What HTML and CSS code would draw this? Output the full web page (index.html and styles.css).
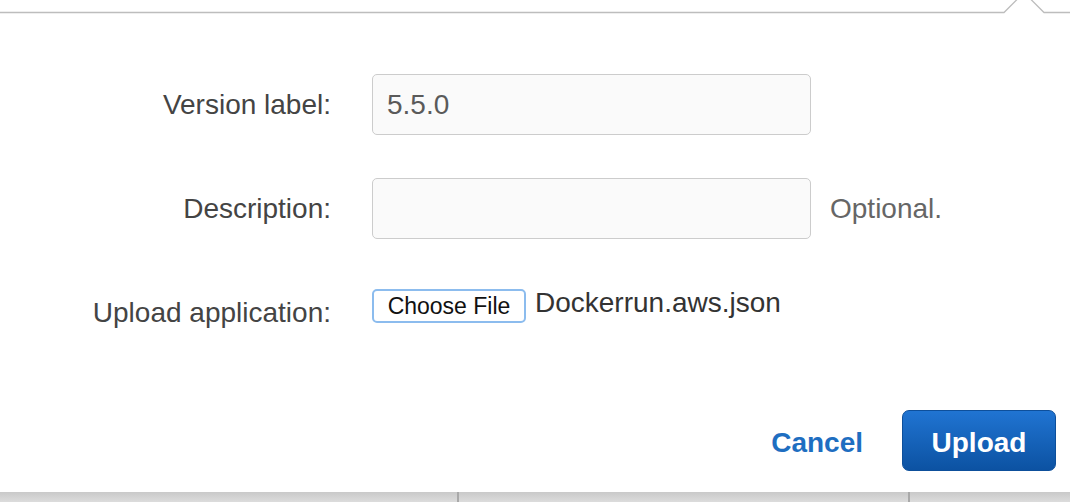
FILE: index.html
```html
<!DOCTYPE html>
<html>
<head>
<meta charset="utf-8">
<link rel="stylesheet" href="styles.css">
</head>
<body>
<div class="page">
  <svg class="topline" width="1070" height="14" viewBox="0 0 1070 14">
    <polyline points="0,12.5 1004,12.5 1024,-7.5 1044,12.5 1070,12.5" fill="none" stroke="#bdbdbd" stroke-width="1.3"/>
  </svg>
  <form class="form">
    <div class="row row-version">
      <label class="label">Version label:</label>
      <div class="input">5.5.0</div>
      <span class="note"></span>
    </div>
    <div class="row row-desc">
      <label class="label">Description:</label>
      <div class="input"></div>
      <span class="note">Optional.</span>
    </div>
    <div class="row row-file">
      <label class="label label-file">Upload application:</label>
      <div class="file">
        <span class="file-btn">Choose File</span>
        <span class="file-name">Dockerrun.aws.json</span>
      </div>
    </div>
  </form>
  <div class="actions">
    <a class="cancel">Cancel</a>
    <span class="upload">Upload</span>
  </div>
  <div class="bottombar">
    <div class="cell cell1"></div>
    <div class="cell cell2"></div>
    <div class="cell cell3"></div>
  </div>
</div>
</body>
</html>
```

FILE: styles.css
```css
html, body {
  margin: 0;
  padding: 0;
  background: #ffffff;
}
.page {
  width: 1070px;
  height: 502px;
  overflow: hidden;
  display: flex;
  flex-direction: column;
  font-family: "Liberation Sans", Arial, sans-serif;
  color: #444444;
}
.topline {
  display: block;
  flex: none;
}
.form {
  margin: 60px 0 0 0;
  display: flex;
  flex-direction: column;
}
.row {
  display: grid;
  grid-template-columns: 331px 439px auto;
  column-gap: 41px;
  align-items: center;
}
.row-desc {
  margin-top: 43px;
}
.row-file {
  margin-top: 50px;
  align-items: start;
}
.label {
  text-align: right;
  font-size: 28px;
  color: #444444;
  justify-self: end;
  white-space: nowrap;
}
.label-file {
  padding-top: 8px;
}
.input {
  box-sizing: border-box;
  height: 61px;
  border: 1.5px solid #cccccc;
  border-radius: 5px;
  background: #fafafa;
  padding: 0 14px;
  display: flex;
  align-items: center;
  font-size: 28px;
  color: #5a5a5a;
}
.note {
  margin-left: -22px;
  font-size: 28px;
  color: #666666;
}
.file {
  display: flex;
  align-items: flex-start;
  gap: 9px;
  white-space: nowrap;
}
.file-btn {
  box-sizing: border-box;
  width: 154px;
  height: 34px;
  border: 2px solid #8cbcee;
  border-radius: 5px;
  background: #ffffff;
  color: #111111;
  font-size: 23px;
  display: flex;
  align-items: center;
  justify-content: center;
}
.file-name {
  font-size: 28px;
  color: #333333;
  line-height: 28px;
}
.actions {
  margin-top: 81px;
  display: flex;
  justify-content: flex-end;
  align-items: center;
  padding-right: 14px;
  gap: 39px;
}
.cancel {
  font-size: 28px;
  font-weight: bold;
  color: #1e6ec1;
  padding-top: 5px;
}
.upload {
  box-sizing: border-box;
  width: 154px;
  height: 61px;
  padding-top: 4px;
  border: 1px solid #0d4f9b;
  border-radius: 7px;
  background: linear-gradient(#2074d2, #0c52a2);
  color: #ffffff;
  font-size: 28px;
  font-weight: bold;
  display: flex;
  align-items: center;
  justify-content: center;
}
.bottombar {
  margin-top: auto;
  height: 10px;
  display: flex;
  background: linear-gradient(#c9c9c9, #dcdcdc);
}
.cell {
  height: 100%;
}
.cell1 {
  width: 457px;
}
.cell2 {
  width: 449px;
  border-left: 2px solid #a9a9a9;
}
.cell3 {
  flex: 1;
  border-left: 2px solid #a9a9a9;
}
```
